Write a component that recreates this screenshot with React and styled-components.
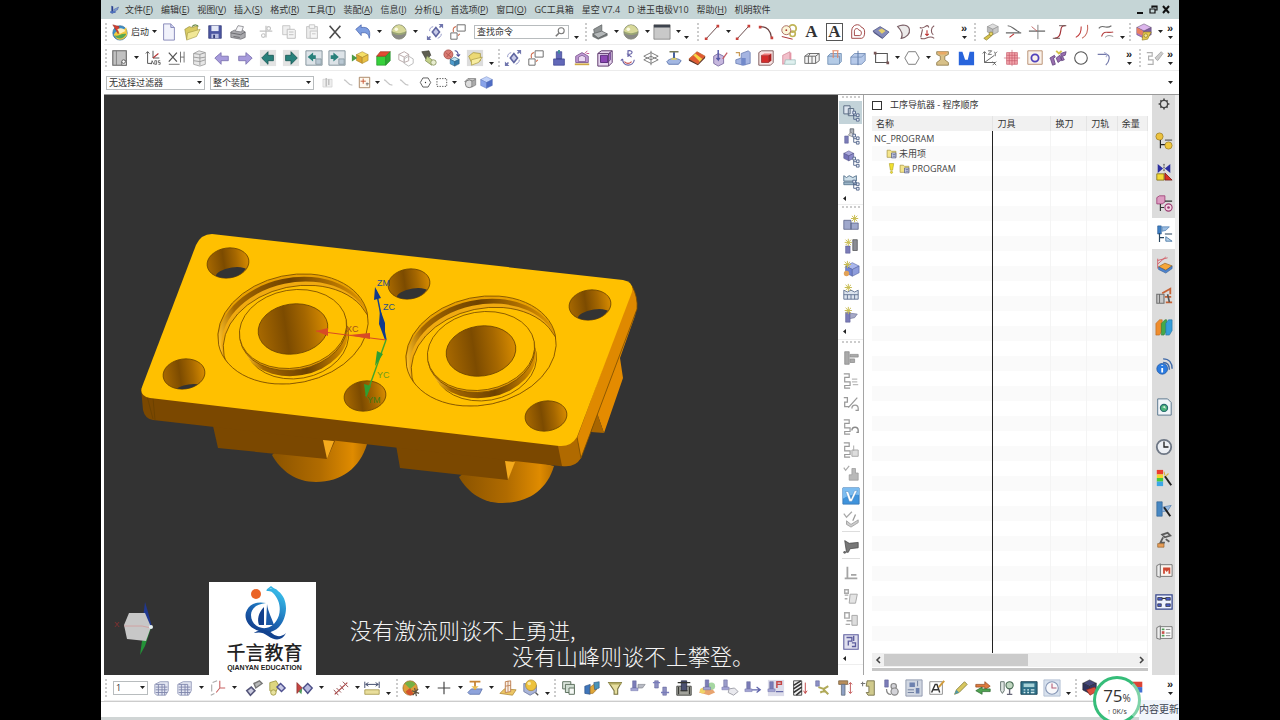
import * as React from 'react';
import styled, { createGlobalStyle, css } from 'styled-components';

const GlobalStyle = createGlobalStyle`
  * {
    box-sizing: border-box;
  }

  body {
    margin: 0;
    background: #000;
    color: #333;
    font: 9px/12px 'Open Sans', 'Noto Sans CJK SC', sans-serif;
  }

  button,
  select,
  input {
    margin: 0;
    padding: 0;
    border: 0;
    background: none;
    color: inherit;
    font: inherit;
  }
`;

/* ---------- icons, all on a 20 x 20 grid: [path, fill, stroke, width] ---------- */

const dot = (x, y, r) => `M${x - r} ${y}a${r} ${r} 0 1 0 ${2 * r} 0a${r} ${r} 0 1 0 ${-2 * r} 0z`;

const cube = (x, y, s, top, left, right, line) => [
  [`M${x} ${y + s / 4}l${s / 2} ${-s / 4} ${s / 2} ${s / 4} ${-s / 2} ${s / 4}z`, top, line, 0.6],
  [`M${x} ${y + s / 4}l${s / 2} ${s / 4}v${s / 2}l${-s / 2} ${-s / 4}z`, left, line, 0.6],
  [`M${x + s} ${y + s / 4}l${-s / 2} ${s / 4}v${s / 2}l${s / 2} ${-s / 4}z`, right, line, 0.6],
];

const star = (x, y) => [
  [`M${x} ${y - 4}v8M${x - 4} ${y}h8M${x - 3} ${y - 3}l6 6M${x + 3} ${y - 3}l-6 6`, 'none', '#c9bd52', 1.1],
];

const drill = (x, y, color = '#7b7cb8') => [
  [`M${x} ${y}h4v8h-4z`, color, '#5c5d94', 0.5],
  [`M${x - 2} ${y + 8}h8v3h-8z`, '#a3a4d4', '#6a6ba3', 0.5],
];

const tree = (x, y) => [
  [`M${x} ${y}v7h3M${x} ${y + 3}h3`, 'none', '#52658a', 1],
  [`M${x - 1} ${y - 2}h3v3h-3zM${x + 3} ${y + 1}h3v3h-3zM${x + 3} ${y + 6}h3v3h-3z`, '#e9eef8', '#52658a', 1],
];

const squiggle = [['M2 2h6v4h-5v5h6v4h-6v3h6', 'none', '#999', 1.3]];

const icons = {
  nx: [
    ['M4 3l3 1v12H4z', '#29408f'],
    ['M8 9l8-4-2 5-3 1v3H8z', '#7f9cd0', '#29408f', 0.6],
    ['M2 12h8v3H2z', '#4e70bb'],
  ],
  launch: [
    [dot(10, 11, 8), '#3f8fc8', '#2a6490', 0.7],
    ['M3 13c4-7 9-3 14-8l1 8c-3 6-9 7-12 4z', '#f3c83f'],
    ['M4 14c5 1 7-3 13-2-2 6-10 7-13 2z', '#57a854'],
    ['M2 2l7 2-1 8z', '#d33f31', '#8c2a20', 0.5],
    ['M7 7c4-2 7-1 9 2l-6 3z', '#fff1bd'],
  ],
  newFile: [
    ['M4 1h8l4 4v14H4z', '#f1f2fb', '#8183b5', 1],
    ['M12 1v4h4', '#cfd2ee', '#8183b5', 1],
  ],
  open: [
    ['M2 7l5-3 3 1 6-2v9L4 18z', '#d9cb62', '#93893a', 0.7],
    ['M5 11l14-4-4 8-11 4z', '#f1e796', '#a69b44', 0.7],
    ['M10 4c3-3 6-2 7 0', 'none', '#6b8a4b', 1.2],
  ],
  save: [
    ['M3 3h14v14H3z', '#4b56a2', '#333b77', 0.8],
    ['M6 3h8v6H6z', '#e4e8f6'],
    ['M6 12h8v5H6z', '#b6bce0'],
    ['M8 13h2v4H8z', '#333b77'],
  ],
  print: [
    ['M2 10l4-2h9l3 2v6l-5 2-11-2z', '#a9a9ad', '#6d6d72', 0.8],
    ['M7 9l3-6 6 1-2 6z', '#f5f5f7', '#77777c', 0.8],
    ['M2 11l11 2 5-3M5 15l7 1', 'none', '#66666b', 1],
  ],
  cut: [['M10 3v13M3 9h14', 'none', '#c2c2c2', 1.4], [dot(7, 14, 2), 'none', '#c2c2c2', 1.2], [dot(13, 6, 2), 'none', '#c2c2c2', 1.2]],
  copy: [['M3 3h8v10H3z', '#efefef', '#c4c4c4', 1], ['M8 7h8l1 1v9H8zM10 10h5M10 13h5', '#f4f4f4', '#bcbcbc', 1]],
  paste: [['M4 4h12v13H4z', '#ececec', '#c2c2c2', 1], ['M7 2h6v4H7zM8 9h8v8H8zM10 12h4', '#f6f6f6', '#c4c4c4', 1]],
  del: [['M4 3l12 14M16 3L4 17', 'none', '#4c4c4c', 1.8]],
  undo: [['M2 7l6-5v3c7-1 11 2 9 12-1-5-3-7-9-6v3z', '#7d9de0', '#4562aa', 0.8]],
  globe: [
    [dot(10, 10, 8), '#9aa574', '#74795e', 0.7],
    ['M2 9c4-9 12-9 16 0-5 3-11 3-16 0z', '#d8d99a'],
    ['M2 11c5 3 11 3 16 0-2 8-13 10-16 0z', '#8a8a86'],
    [dot(7, 7, 2), '#fafae4'],
  ],
  rotate: [
    ['M7 10l4-5 4 5-4 5z', '#c7cae8', '#5f65a0', 1.8],
    ['M14 1h5v5zM6 19H1v-5z', '#6f75ad'],
    ['M15 5l2-2M5 15l-2 2', 'none', '#6f75ad', 1.8],
    ['M4 9c0-3 1-4 4-5M17 12c0 3-2 4-4 5', 'none', '#8d92c4', 1],
  ],
  boxes: [['M9 2h9v7H9zM2 11h7v7H2z', '#fff', '#707070', 1.1], ['M5 10c-1-4 0-5 3-6M12 12l-2 2', 'none', '#ce6b4c', 1.2]],
  sheet: [
    ['M3 7l9-5v8L4 13z', '#8f9394', '#5d6162', 0.8],
    ['M2 12l10-3 6 3-10 5z', '#b4b8b9', '#5d6162', 0.8],
    ['M2 12v3l6 3 10-4v-2l-10 5z', '#74797a', '#55595a', 0.6],
  ],
  swatch: [['M1 2h18v16H1z', '#c9c9c9', '#777', 0.8], ['M1 2h18v3H1z', '#3d434d']],
  line: [['M4 17L16 4', 'none', '#5b3b3b', 1], ['M2 16h3v3H2zM15 2h3v3h-3z', '#c8413b']],
  arc: [['M4 4c7 0 11 4 12 12', 'none', '#6b4444', 1.3], ['M2 3h3v3H2zM15 15h3v3h-3z', '#c8413b']],
  circles: [
    [dot(14, 6, 4), 'none', '#c0b457', 2],
    [dot(14, 12, 3), 'none', '#c0b457', 1.8],
    [dot(7, 8, 5), '#fbf6d8', '#a6655b', 1],
    [dot(7, 8, 1), '#a33'],
    ['M2 15l12 3', 'none', '#a33', 1.1],
  ],
  profileLoop: [
    ['M3 17V9c0-8 9-9 11-4 5 0 4 12 0 12z', 'none', '#a34a4a', 1.1],
    ['M6 14v-5c0-3 4-4 5-1 4 0 3 6 1 6z', 'none', '#a34a4a', 1.1],
  ],
  plane: [['M1 9l8-5 10 6-7 7z', '#858bb9', '#4d5280', 0.8], ['M7 8l4-2 4 3-4 3z', '#e5cf6c'], ['M1 9l10 7 1 2-10-7z', '#4d5280']],
  shape: [['M3 4c5-3 12-2 13 3 1 5-3 9-9 10 2-4 1-8-4-13z', '#eceaea', '#7a5f66', 1.3]],
  spline: [
    ['M2 5c5 3 8-6 10 0M18 3c-4 2-4 8-1 10M3 17c5 3 9-5 15 0M5 7l-2 9', 'none', '#82595e', 1.2],
    ['M10 8v6m-2-2l2 2 2-2', 'none', '#bd2f2f', 1.2],
  ],
  keyCube: [...cube(6, 1, 12, '#ddd', '#bbb', '#c9c9c9', '#888'), ['M2 17l7-5 2 2-6 5z', '#d7c34c', '#8e8030', 0.8], [dot(10, 12, 2), '#e8d664', '#8e8030', 0.8]],
  joinRight: [['M3 3c5 0 6 4 13 7M1 11h17', 'none', '#666', 1.2], ['M5 16l5-4', 'none', '#bd2f2f', 1.2]],
  joinCross: [['M1 9h18', 'none', '#666', 1.4], ['M11 2v16', 'none', '#777', 1], ['M4 4l6 5', 'none', '#bd5f5f', 1]],
  sCurve: [['M16 3c-9-1-1 13-12 14', 'none', '#a5343a', 1.3], ['M9 3h8M2 17h8', 'none', '#6d5b5b', 1.1]],
  twoArcs: [['M8 4c0 6-1 9-6 12', 'none', '#c03a3a', 1.2], ['M15 2c1 7-1 12-6 15', 'none', '#c76b5f', 1.2]],
  tilde: [['M2 6c4-6 7 2 14-3', 'none', '#6a6a6a', 1.2], ['M5 15c3-8 7-3 13-5', 'none', '#b74747', 1.3], ['M9 16c3-3 6-2 9-1', 'none', '#888', 1]],
  colorCube: [
    ...cube(2, 1, 16, '#dcb5ec', '#ab78c7', '#7f5fa2', '#5f4a70'),
    ['M9 10h9l-4 8-6 1z', '#e6c94c', '#8f7c27', 0.7],
    [dot(12, 14, 2), '#f3e59b', '#8f7c27', 0.8],
    ['M2 5l7 4-1 5-6-3z', '#e97f60'],
  ],
  drawer: [
    ['M2 2h15v16H2z', '#c1c1c1', '#646464', 1.2],
    ['M6 2v16', 'none', '#7d7d7d', 1],
    ['M12 18v-4a3 3 0 0 1 5 0v4z', '#eee', '#555', 0.8],
    [dot(14, 14, 2), '#fff', '#555', 1],
  ],
  abs: [
    ['M4 3v13h5M10 2v8h7M4 3l-2 2M4 3l2 2', 'none', '#555', 1.1],
    ['M10 10l6-5', 'none', '#b53232', 1.2],
    ['M8 17l1-4 2 4M12 13h2v4h-2zM18 13h-2v2h2v2h-2', 'none', '#555', 0.9],
  ],
  xBar: [['M2 4l9 10M11 4L2 14', 'none', '#555', 1.4], ['M15 3v12M19 3v12M2 17h12M15 9h4', 'none', '#6a6a6a', 1]],
  building: [['M4 5l6-3 7 2v13l-6 2-7-2z', '#e7e7e7', '#999', 0.9], ['M4 9l7 1 6-1M4 13l7 1 6-2M4 5l7 1 6-2M11 6v12', 'none', '#999', 1]],
  left: [['M2 10l7-6v4h8v5H9v4z', '#a79bdc', '#776dac', 0.9]],
  right: [['M18 10l-7-6v4H3v5h8v4z', '#a79bdc', '#776dac', 0.9]],
  tealLeft: [['M1 1h18v18H1z', '#e3e3e3'], ['M3 10l7-7v4h6v6h-6v4z', '#28807b', '#175653', 0.9]],
  tealRight: [['M1 1h18v18H1z', '#e3e3e3'], ['M17 10l-7-7v4H4v6h6v4z', '#28807b', '#175653', 0.9]],
  winLeft: [['M1 2h18v16H1z', '#dde3e8', '#7f8f98', 1], ['M3 9l6-5v3h3v4H9v3z', '#28807b'], ['M12 11h6v6h-6z', '#bac9d4', '#7f8f98', 0.8]],
  winRight: [['M1 2h18v16H1z', '#dde3e8', '#7f8f98', 1], ['M12 9L6 4v3H3v4h3v3z', '#28807b'], ['M12 11h6v6h-6z', '#bac9d4', '#7f8f98', 0.8]],
  yellowCube: [...cube(6, 3, 13, '#f5df67', '#dca430', '#e8c145', '#a27e24'), ['M1 6l6 4-6 4z', '#4b9a48']],
  greenCube: [['M3 8h10v10H3z', '#36d13b', '#208d24', 0.7], ['M3 8l4-5h11l-5 5z', '#e34a32', '#9d2d1e', 0.7], ['M13 8l5-5v10l-5 5z', '#2eaa33', '#208d24', 0.7]],
  grayCubes: [['M2 6l6-3 5 3v7l-5 2-6-3zM2 6l6 3 5-3M8 9v6', 'none', '#b5a4a4', 1], ['M8 11l5-3 5 3v5l-5 3-5-3z', 'none', '#b8b8b8', 1]],
  wrench: [['M2 3l8-1 2 5-5 5z', '#5f5f52', '#3a3a30', 0.7], ['M8 8l8 6-3 4-7-5z', '#c3d189', '#84905b', 0.9], [dot(15, 15, 3), '#e8edd0', '#84905b', 0.9]],
  linkCube: [[dot(6, 6, 5), '#d97b73', '#9d4038', 0.8], ['M3 4l6 5M9 3L4 9', 'none', '#b1534b', 1], ['M13 2c3 0 4 2 4 6m-2-2l2 2 2-2', 'none', '#4d4f99', 1.2], ...cube(8, 9, 10, '#bfe3f1', '#4c9acb', '#357ba8', '#27597a')],
  folderNew: [['M1 1h18v18H1z', '#dcdcdc'], ['M3 8l5-4 8 1v8l-9 4z', '#ecd975', '#a39238', 0.8], ['M6 12l12-3-4 6-8 3z', '#f8eda1', '#a39238', 0.7]],
  pillar: [['M7 3h6v8H7zM4 11h12v7H4z', '#6268b8', '#3e4390', 0.8], ['M10 1v4', 'none', '#3c8f95', 2]],
  sketchPurple: [['M3 15V8l7-4 7 4v7z', '#c099d4', '#75518a', 0.9], ['M6 14V9l4-2 4 2v5z', '#ead8f2', '#75518a', 0.8], ['M2 17h16', 'none', '#cfa843', 2], ['M16 2l-3 3M18 5h-3', 'none', '#c34b88', 1]],
  wireCube: [['M2 5l4-3h12v13l-4 4H2z', '#e6d4ef', '#5f3d6e', 1.1], ['M5 7h8v8H5z', '#8c46b5', '#542777', 1], ['M13 7l3-3v8l-3 3z', '#b274d5', '#542777', 0.8], ['M2 5h12v14M14 5l4-3', 'none', '#5f3d6e', 1]],
  hookR: [['M4 11c0 9 12 9 13 1M4 11l-2 2M10 9V2c6-1 6 4 0 4l4 3', 'none', '#6460a5', 1.3], ['M6 14c3 3 6 2 8 0', 'none', '#c65050', 1.2]],
  layersGray: [['M2 8l8-4 8 4-8 4zM2 12l8-4 8 4-8 4zM10 2v16', 'none', '#808080', 1.1]],
  bluePad: [['M2 14c3-4 11-5 16-1l-3 4H4z', '#a3b7e2', '#526ca7', 0.9], ['M5 3h10M10 3v8', 'none', '#767b5a', 1.6], ['M10 8l-4 4h8z', '#d6ca66'], ['M10 4v6', 'none', '#3e5ba0', 2]],
  stripes: [['M1 11l9-8 9 5-8 9z', '#f7d546', '#8a3a1d', 0.6], ['M1 11l5-4 7 7-2 3zM10 3l9 5-3 3-8-6z', '#df5b33'], ['M1 11v2l10 5 8-8V8l-8 9z', '#5b2d1f']],
  arrowPad: [['M3 8l5-3 6 3v8l-6 3-5-3z', '#c6b7de', '#71629a', 0.9], ['M8 1v11l-2-2m2 2l2-2', 'none', '#575ba7', 1.6], ['M18 4l-5 7', 'none', '#c65b63', 1.4]],
  blueSteps: [['M2 12l6-2V5l8-3 2 2v12l-8 2-8-2z', '#a5b5e2', '#6175ad', 0.8], ['M8 10h5v8H8z', '#7189ca'], ['M2 4h4v4', 'none', '#c99b57', 1.3]],
  redCube: [['M2 4l3-2h13v13l-3 3H2z', '#f6e3e3', '#7b5656', 1], ['M5 7h8v8H5z', '#d42b2b', '#8a1717', 0.7], ['M5 7l3-2h8l-3 2z', '#f07a7a'], ['M13 7l3-2v8l-3 2z', '#a91e1e']],
  pinkFold: [['M3 7l8-4v11l-8 3z', '#f1bfca', '#cf8193', 0.8], ['M6 12h11v5H5z', '#dff0ef', '#9bbcba', 0.8], ['M12 4v8', 'none', '#de6d85', 1]],
  tray: [['M2 8l4-3h12v8l-4 3H2zM2 8h12v8M14 8l4-3M8 5l-2 3v8M10 8v8', '#f4f4f4', '#616161', 1]],
  splitPad: [['M2 8l3-3h12v9l-3 3H2z', '#b4cbe6', '#6889b0', 0.9], ['M2 8h13v9', 'none', '#6889b0', 0.8], ['M7 2h7M8 2v8M13 2v8', 'none', '#e18868', 1.2]],
  blueSlab: [['M2 9l4-4h12v8l-4 4H2z', '#b6c9e9', '#6c87b1', 0.9], ['M10 2v16', 'none', '#5d79a9', 1.1], ['M2 9h12l4-4', 'none', '#6c87b1', 0.8]],
  rect: [['M4 5h13v10H4z', 'none', '#565656', 1.2], ['M2 3h3v3H2zM16 14h3v3h-3z', '#755']],
  hexagon: [['M6 3h8l4 7-4 7H6l-4-7z', 'none', '#808080', 1.1]],
  spool: [['M3 3h13v3l-4 2v4l4 3v3H3v-3l4-3V8L3 6z', '#d8c189', '#8c7848', 0.9], ['M4 3h11l-2 3H6z', '#e9a964']],
  bigU: [['M2 3h4l3 9h3l2-9h5v15H2z', '#2864dc']],
  zyx: [['M5 3v12h12M5 15L16 7M5 3L3 5M5 3l2 2', 'none', '#666', 1.1], ['M9 2h4L9 6h4M16 3l1 2 2-2M17 5v3M14 14l4 4M18 14l-4 4', 'none', '#666', 1]],
  pinkGrid: [['M4 4h12v13H4z', '#f2a4ab', '#cc6572', 0.8], ['M1 10h18M10 1v18M4 7h12M4 13h12M7 4v13M13 4v13', 'none', '#c65768', 0.7]],
  ring: [['M2 2h16v15H2z', '#faf1e9', '#ba9477', 1.1], [dot(10, 10, 4), 'none', '#5041bb', 2]],
  tag: [['M1 10l5-3 1 2-2 1 2 7-3 1-2-6zM8 10l4-3 2 5-4 3zM13 5l6-2-1 4-3 1 2 4-3 1z', '#9a6fb0', '#62447d', 0.9], ['M8 2l3 3 3-3', 'none', '#d6c14b', 2]],
  circle: [[dot(10, 10, 7), 'none', '#555', 1.2]],
  hook: [['M3 6h9c6 0 4 8 0 12', 'none', '#7379aa', 1.3], ['M10 4c4 1 4 3 2 5', 'none', '#a5a9cf', 1.2]],
  path: [['M2 4h6v4H4v4h5v5H3', 'none', '#b0b0b0', 1.3], ['M11 10l7-7 2 2-6 8z', '#ccc', '#aaa', 1]],
  gearBox: [['M3 5h14v12H3z', '#eee', '#ccc', 1], ['M8 3v13M12 5v9', 'none', '#b9b9b9', 2]],
  dashes: [['M3 6c5 0 4 7 13 8', 'none', '#c6c6c6', 2]],
  plusBox: [['M2 2h16v16H2z', '#fff9ef', '#a07a55', 1.3], ['M4 8h8M8 4v8', 'none', '#c3522e', 1.4], ['M12 12h5M14 10v5', 'none', '#555', 1.1]],
  hexDot: [['M6 3h8l4 7-4 7H6l-4-7z', 'none', '#555', 1.4], [dot(10, 10, 1), '#333']],
  dashRect: [['M3 4h15v12H3z', 'none', '#444', 1.4, '2 2']],
  grayCube: [['M1 9l5-5h12l-3 5z', '#ccc', '#666', 1], [dot(8, 12, 6), '#ddd', '#666', 1.2], ['M12 8v9l6-3V5z', '#aaa', '#777', 1]],
  blueCube: cube(1, 1, 18, '#c2d3fa', '#88a3ea', '#4e6cc4', '#4f68b0'),
  layerStack: [['M2 6l6-3h9v10l-3 5H4l-2-2z', '#e3e6f2', '#7f86ac', 0.8], ['M3 6h10v12M3 9h13M3 12h13M3 15h13M6 6v12M10 6v12', 'none', '#7f86ac', 1]],
  redAxes: [['M12 2v8h6M12 10l-4 5', 'none', '#c76060', 1.2], ['M4 4l5-2M3 6v8M2 18l4-2', 'none', '#a9a9a9', 1.2]],
  chain: [['M2 13l5-4 4 4-5 5z', '#cacbdf', '#545579', 1.8], ['M10 5l6-3 3 3-7 5z', '#b7b8b9', '#777', 1.6]],
  chainGold: [['M2 4l7-2 3 5-4 9-6-3z', '#ded680', '#9c943e', 0.9], ['M10 9l4-4 5 5-4 4z', '#c8c9e6', '#4f5190', 1.6], [dot(6, 15, 3), '#e8e29f', '#9c943e', 0.9]],
  eraser: [['M1 4l6 6-6 6z', '#c44542', '#812826', 0.7], ['M3 14l4-4-1 7z', '#4f9a5c'], ['M8 10l5-5 5 5-5 6z', '#b8badf', '#4b4e87', 1.6]],
  ruler: [['M3 17L17 4', 'none', '#a93737', 1.2], ['M2 12l5 6M5 10l5 5M9 7l4 5M12 3l6 6', 'none', '#9b5a5a', 1.1]],
  measure: [['M2 12h16v5H2z', '#e9de9c', '#a39549', 0.9], ['M2 3v7M18 3v7M3 6h14M6 4L3 6l3 2M14 4l3 2-3 2', 'none', '#46506f', 1.1]],
  palette: [[dot(9, 10, 8), '#df9d37', '#8b5a1f', 0.7], ['M3 5c4-4 10-3 12 1l-6 5z', '#76b043'], ['M4 14l5-4 4 7c-4 2-7 1-9-3z', '#d2542d'], ['M11 13l8 3M14 10l2 9M12 18l6-7', 'none', '#5b5040', 1.3]],
  plus: [['M10 3v14M3 10h14', 'none', '#444', 1.3]],
  lampPad: [['M2 15l4-4h12l-3 6H4z', '#8ea3db', '#5067a3', 0.8], ['M4 3h12M10 3v9', 'none', '#c78435', 2], ['M6 8h8l-4 4z', '#ebbf55']],
  goldBox: [['M1 16l5-5 13 1-4 6z', '#ecc665', '#aa812b', 0.8], ['M7 3l6-1v12l-6 1z', '#f9efe6', '#bb7a4b', 1], ['M10 2v12M7 8l6-1', 'none', '#bb7a4b', 0.9]],
  goldBall: [['M2 5v9l7 4 7-4V7z', '#a9b4d8', '#68749f', 0.9], [dot(10, 7, 6), '#edc23d', '#a9851f', 0.7], [dot(8, 5, 2), '#fae8a4'], ['M15 15l3 3', 'none', '#555', 1.5]],
  windows: [['M3 3h9v8H3z', '#e1e9e1', '#5e7160', 1.1], ['M6 6h10v9H6z', '#d0ddd2', '#5e7160', 1.1], ['M10 10h6v7h-6z', '#f5f8f5', '#5e7160', 1.1]],
  blueGold: [['M2 8l6-2v11l-6-1z', '#3f76bb', '#284d80', 0.7], ['M8 9l4-3h3v6l-4 4H8z', '#e0a739', '#94661c', 0.7], ['M12 4l6-1v7l-5 2z', '#4a94b8', '#284d80', 0.6]],
  funnel: [['M3 4h14l-4 7v6H9v-4z', '#e7df9f', '#77733f', 1.2], ['M3 4h14v2H4z', '#b1aa60']],
  toolA: [...drill(4, 2), ['M10 6h8l-3 4h-5z', '#b7bac4', '#7c7f88', 0.7]],
  toolB: [['M3 2h4v8H3zM12 9h4v9h-4z', '#8f91c4', '#5c5d94', 0.6], ['M1 4h8M10 15h9', 'none', '#797dba', 1.6]],
  toolHead: [['M2 8h16v10H2z', '#a1a29b', '#42433f', 1], ['M7 2h6v11H7z', '#4c5170', '#22263f', 0.8], ['M3 4h14M4 9v8M16 9v8M6 13h8', 'none', '#33342f', 1.2]],
  toolHeat: [['M1 15l5-6 9 1 4 5-7 3z', '#e8a46f'], [dot(15, 8, 4), '#a6d7a2'], [dot(5, 13, 3), '#f0d568'], ...drill(8, 1)],
  toolC: [...drill(3, 1, '#9a9cc9'), ['M9 11l6-1 4 4-5 4-6-3z', '#e9e9ee', '#9b9ca5', 1]],
  toolD: [...drill(3, 3), ['M9 12h9M14 9l4 3-4 3', 'none', '#5f64ab', 1.4]],
  toolE: [['M1 1h18v18H1z', '#dcdcea'], ...drill(3, 3), ['M11 10V3h5v3h-5', 'none', '#c44444', 1.6], ['M10 14h8', 'none', '#6468a8', 1.4]],
  hatch: [['M4 2h9v16H4z', '#f1f1f1', '#444', 1], ['M4 7l8-5M4 11l9-6M4 15l9-6M7 18l6-5', 'none', '#333', 1.7], ['M17 4v12m-2-3l2 3 2-3', 'none', '#bd3d3d', 1]],
  wires: [['M3 2h4v6H3z', '#8d91c6', '#5c5d94', 0.6], ['M6 9l6 2 5-3M8 15l5-2 4 4M12 11v4', 'none', '#b0a958', 2.2]],
  bolt: [['M3 2h10v4H3z', '#b98f5b', '#7c6240', 0.9], ['M6 6h4v12H6z', '#8fa0c4', '#64707e', 0.9], ['M16 4v12M14 6l2-2 2 2M14 14l2 2 2-2', 'none', '#bd4d4d', 1]],
  block: [['M9 2h8v16h-7l-2-3h3V8H8z', '#d0ca8d', '#77734c', 1], ['M2 5h5M4 3v5', 'none', '#777', 1.2]],
  ears: [['M3 1h4v8H3z', '#7b7cb8', '#5c5d94', 0.6], [dot(13, 8, 3), '#d3d3d8', '#888', 1.3], [dot(14, 14, 4), '#d3d3d8', '#888', 1.3], ['M5 11c0 5 2 6 5 6', 'none', '#888', 1.4]],
  floppy: [['M1 1h18v18H1z', '#d1d7e2', '#8c96ab', 1], ['M5 4h6v5H5zM12 10h4v6h-4z', '#6d81af'], ['M3 12h7M3 15h7M14 2v6', 'none', '#68789a', 1]],
  textEdit: [['M2 3h14v14H2z', '#fff', '#888', 1], ['M4 15l4-9h2l3 9M5 12h6', 'none', '#333', 1.6], ['M12 9l6-7', 'none', '#d19c3c', 2.2]],
  pencil: [['M4 17l2-5 9-9 3 3-9 9z', '#d8c75f', '#86803e', 0.9], ['M4 17l2-5 3 3z', '#4f98a8']],
  swap: [['M2 6h10V3l6 5-6 4V9H2z', '#de7a3d', '#93471d', 0.8], ['M18 14H9v3l-7-4 7-4v2h9z', '#4fa352', '#2a672c', 0.8]],
  pens: [['M4 3h4v10l-2 3-2-3z', '#dfe5e2', '#5e6e69', 1], [dot(14, 7, 4), '#c0d7c1', '#4a6c55', 1.2], ['M14 11v6M11 17h6', 'none', '#667', 1.5]],
  calc: [['M1 3h18v14H1z', '#2e7088', '#174356', 1], ['M4 5h12v4H4z', '#a8d2d8'], ['M4 12h2M8 12h2M12 12h4M4 15h2M8 15h2M12 15h4', 'none', '#d2ecef', 1.4]],
  clockBox: [['M1 1h18v18H1z', '#d7e1ee', '#b2c0d3', 1], [dot(10, 10, 7), '#f7f8fb', '#8495b5', 1.2], ['M10 5v5h5', 'none', '#b65c75', 1.2]],
  darkCube: [...cube(2, 1, 15, '#45487b', '#2e315d', '#35396b', '#222'), ['M6 12l9-3 4 4-9 5z', '#db4f3e', '#7e241a', 0.7]],
  blocks: [['M3 3h14v6H3z', '#dc4334'], ['M3 9h14v6H3z', '#416fd2']],
  navOrder: [['M2 2h7v9H2zM7 5h6v8H7z', '#dce4ee', '#5b6d84', 1.1], ...tree(13, 10)],
  navTool: [['M9 2h4v7H9z', '#adb2ba', '#5e636b', 0.9], ['M7 9l3-3 4 3-2 2z', '#d2d5da', '#777', 0.7], ['M3 10h4v8H3z', '#7b7cb8', '#5c5d94', 0.6], ...tree(13, 10)],
  navGeo: [...cube(2, 1, 11, '#a9a7db', '#7472b8', '#8c8acb', '#4d4c83'), ...tree(13, 10)],
  navMethod: [['M2 3l3 2 3-2 4 2 4-2v6H2z', '#cfe0ea', '#526f8a', 1], ['M2 10h14v3H2z', '#9db6c8', '#526f8a', 0.9], ...tree(13, 10)],
  newProg: [['M2 7h8v10H2zM10 10h8v7h-8z', '#9fa8cc', '#5c6589', 0.9], ...star(14, 5)],
  newTool: [['M4 10h5v8H4z', '#7b7cb8', '#5c5d94', 0.6], ['M12 3h5v12h-5z', '#8a8c92', '#4d4e52', 0.8], ...star(7, 6)],
  newGeo: [...cube(4, 3, 15, '#aab7ec', '#7183d0', '#8e9ddc', '#4d5b9b'), ...star(6, 5), [dot(5, 15, 3), '#e1a259']],
  newMethod: [['M2 8l4 2 4-2 4 2 4-2v10H2z', '#dbe3ee', '#5f7090', 1], ['M2 13h16M6 13v5M10 13v5M14 13v5', 'none', '#5f7090', 1], ...star(7, 5)],
  newOp: [['M4 7h5v11H4z', '#7b7cb8', '#5c5d94', 0.6], ['M9 8l8 1-3 4-5 1z', '#a7aac7', '#6b6f96', 0.7], ...star(7, 5)],
  gTool: [['M3 3h5v14H3zM9 6h9v3H9zM9 11h5v4H9z', '#aaa', '#888', 0.8]],
  gPath1: [...squiggle, ['M11 8h6M11 11h6M12 14h6', 'none', '#bbb', 1.4]],
  gPath2: [['M2 3h4v5H3v5h5M17 3L7 14', 'none', '#999', 1.4], ['M11 15c0-5 7-5 7 0v2h-3', 'none', '#999', 1.4]],
  gPath3: [...squiggle, ['M11 14c0-5 7-5 7 0v2h-2', 'none', '#8a8a8a', 1.5]],
  gPath4: [...squiggle, ['M13 5v6M11 10h7v7h-7z', '#ddd', '#aaa', 1.1]],
  gCheck: [['M2 4l2 3 4-5', 'none', '#aaa', 1.3], ['M11 5h4v5h3v8H8v-6h3z', '#b9b9b9', '#999', 0.8]],
  bigV: [['M1 1h18v18H1z', '#3f93dc', '#3b7cb8', 1], ['M1 1h18v8C12 8 6 10 1 13z', '#7cbcf0'], ['M4 5l4 11h3l6-12h-3l-4 9-3-8z', '#fff', '#3b7cb8', 0.5]],
  gCheckPen: [['M2 4l3 4 6-6', 'none', '#aaa', 1.4], ['M5 12l5 4 8-5v3l-8 5-5-3z', '#ccc', '#999', 0.9], ['M15 5l-3 7', 'none', '#999', 1.4]],
  gSpray: [['M3 4l5 3 10-1v6l-9 1-2 4H5z', '#777', '#444', 0.8], [dot(3, 17, 1.5), '#666']],
  gList: [['M6 3v13M3 16h14M10 12h6', 'none', '#a5a5a5', 2]],
  gDoc: [['M3 3h4v4H3zM3 9h4M3 13h3', 'none', '#aaa', 1.6], ['M9 8h8l-2 10H8z', '#e4e4e4', '#aaa', 1.1]],
  gDoc2: [['M3 3h5v6H3zM5 12h6M4 16h5', 'none', '#aaa', 1.6], ['M11 6h6v11h-6z', '#ddd', '#aaa', 1.1]],
  pBox: [['M2 2h16v16H2z', '#dfdfee', '#5d5d9e', 1.2], ['M5 5h6v4H7v5M11 11h4v4h-4M13 3v6', 'none', '#5d5d9e', 1.5]],
  gear: [[dot(10, 10, 6), 'none', '#444', 2.2], ['M10 1v3M10 16v3M1 10h3M16 10h3M4 4l2 2M14 14l2 2M4 16l2-2M14 6l2-2', 'none', '#444', 2.6]],
  rAssembly: [[dot(5, 5, 4), '#ecc23f', '#9b7b22', 0.8], ['M6 9v9M6 14h5', 'none', '#222', 1.3], [dot(15, 15, 4), '#f1c83e', '#9b7b22', 0.8], ['M11 9h8', 'none', '#555', 1.3]],
  rConstraint: [['M3 1l6 5-6 5zM17 1l-6 5 6 5z', '#2c2fa0'], ['M10 1v9', 'none', '#222', 1, '2 1'], ['M2 12h8v7H2z', '#f4da36', '#7f6c18', 0.9], ['M11 11l8 8h-8z', '#d93025', '#6f1610', 0.8]],
  rPart: [['M2 4l3-2h6v7l-3 2H2z', '#dc9cc1', '#9c3b72', 0.9], ['M6 11v8M6 15h4M11 8h8', 'none', '#333', 1.3], [dot(15, 15, 4), '#f4d7e6', '#9c3b72', 1.2], [dot(15, 15, 1.5), '#9c3b72']],
  rOp: [['M3 1h4v9H3z', '#3f7fc4', '#2a5a90', 0.7], ['M8 2h8l-4 4-4 1z', '#9bbce0', '#4576ad', 0.7], ['M5 9v10M5 14h5M11 10h8', 'none', '#29455f', 1.3], ['M12 18v-5l7 5z', '#b9d3ec', '#3f6f9f', 0.9]],
  rMachine: [['M3 9l9-8M3 5l11-3M3 3v11', 'none', '#d25d67', 1], ['M4 12l7-4 8 3-7 5z', '#f5a638', '#a2671c', 0.8], ['M4 12v3l8 4 7-5v-3l-7 5z', '#4c84cf', '#2c548a', 0.6]],
  rRobot: [['M2 8h8v10H2zM5 8v10', '#c9c9c9', '#6f6f6f', 1.2], ['M8 7l9-5v6M11 11h7M12 17h7', 'none', '#c76336', 2], ['M14 8l2 9', 'none', '#555', 1.8]],
  rBooks: [['M1 6l4-4h3v12l-3 5H1z', '#ef8d2e', '#b15f16', 0.6], ['M7 6l4-4h2v12l-3 5H7z', '#44a94a', '#2a752e', 0.6], ['M12 6l3-4h4v12l-3 5h-4z', '#359dda', '#206c9a', 0.6]],
  rInfo: [['M9 5c5 0 7 3 7 8M9 1c7 0 10 5 10 11', 'none', '#3f69a8', 1.6], [dot(8, 12, 6), '#2b7be0', '#1a549f', 0.8], ['M8 11v5M8 8v1', 'none', '#fff', 2]],
  rWeb: [['M3 1h11l4 4v14H3z', '#f2f6fa', '#5d7990', 1.1], [dot(10, 11, 4), '#4bb37a', '#286b70', 1.3], ['M8 10l3-1 1 3z', '#d7efe1']],
  rClock: [[dot(10, 10, 8), '#eceff4', '#6d7684', 2], ['M10 4v6h5', 'none', '#222', 1.5]],
  rRainbow: [['M2 1h7v5H2z', '#ec3c2f'], ['M2 6h7v4H2z', '#f4d62e'], ['M2 10h7v4H2z', '#44c93e'], ['M2 14h7v5H2z', '#3ca7e7'], ['M11 8l7 10', 'none', '#222', 2.2], ['M10 3l1 4M15 5l-3 3', 'none', '#d5b546', 1.2]],
  rWand: [['M2 2h6v16H2z', '#4787c2', '#2e608f', 0.7], ['M8 8l10-2-4 6-6 1z', '#9bbce1', '#4576ad', 0.7], ['M10 8l7 10', 'none', '#222', 2.2]],
  rMotion: [['M8 4l6-2 3 3-6 2zM9 7l-3 6h5M12 9l4 3', 'none', '#5b5b5b', 2], ['M3 14h7v4H3z', '#e89e57', '#8d5b28', 0.7]],
  rNotes: [['M2 4l4-2v15l-4-1z', '#eee', '#6e6e6e', 1], ['M6 3h13v13H6z', '#f9f4ef', '#6e6e6e', 1], ['M9 6v7h2V9l2 2 2-2v4h2V6z', '#ce4832']],
  rFlow: [['M1 2h18v16H1z', '#eef2ff', '#35458b', 1.4], ['M3 5h5v3H3zM12 5h5v3h-5zM3 12h4v3H3zM12 12h5v3h-5z', '#4a5dcb', '#222', 0.7], ['M8 6h4', 'none', '#222', 1.2]],
  rList: [['M2 4l4-2v15l-4-1z', '#eee', '#6e6e6e', 1], ['M6 3h13v13H6z', '#fff', '#6e6e6e', 1], ['M9 5v2M9 12v2', 'none', '#4d9c53', 3], ['M9 8v3', 'none', '#c7534c', 3], ['M12 6h5M12 10h5M12 13h5', 'none', '#777', 1]],
  folder: [['M2 4h6l2 2h8v11H2z', '#f5e58b', '#9e8c39', 1.2], ['M10 9h8v9h-8z', '#cfd4ea', '#474e80', 1.2], ['M12 12h5M12 15h5', 'none', '#474e80', 1.2]],
  alert: [['M6 1h8l-2 12H8z', '#f1e12f', '#a59719', 1], [dot(10, 17, 2), '#f1e12f', '#a59719', 1]],
  search: [[dot(12, 8, 5), 'none', '#777', 1.8], ['M8 12l-5 5', 'none', '#777', 2.6]],
};

const Svg = styled.svg`
  display: block;
  flex: none;
  overflow: visible;
`;

function Icon({ name, size = 18 }) {
  return (
    <Svg width={size} height={size} viewBox="0 0 20 20" aria-hidden="true">
      {icons[name].map(([d, fill, stroke, width, dash], i) => (
        <path key={i} d={d} fill={fill} stroke={stroke || 'none'} strokeWidth={width} strokeDasharray={dash} />
      ))}
    </Svg>
  );
}

/* ---------- window ---------- */

const Screen = styled.div`
  position: relative;
  display: flex;
  flex-direction: column;
  height: 100vh;
  margin: 0 101px;
  padding-left: 3px;
  background: #fff;
  overflow: hidden;
`;

const MenuBar = styled.header`
  display: flex;
  align-items: center;
  height: 19px;
  flex: none;
  margin-left: -3px;
  padding: 0 8px;
  background: #c5d5d6;
`;

const MenuItem = styled.button`
  margin-right: 8px;
  white-space: nowrap;

  &:first-of-type {
    margin-left: 4px;
  }
`;

const WindowButtons = styled.div`
  display: flex;
  gap: 4px;
  margin-left: auto;
`;

const Toolbar = styled.div`
  display: flex;
  flex: none;
  height: ${(p) => (p.$short ? 24 : 26)}px;
  border-bottom: 1px solid ${(p) => (p.$strong ? '#9a9a9a' : '#ececec')};
`;

const Group = styled.div`
  display: flex;
  align-items: center;
  flex: none;
  width: ${(p) => (p.$width ? `${p.$width}px` : 'auto')};

  &:last-child {
    flex: 1;
  }
`;

const Grip = styled.i`
  flex: none;
  ${(p) =>
    p.$flat
      ? css`
          width: 18px;
          height: 4px;
          margin: 1px 0;
          border-top: 2px dotted #ccc;
        `
      : css`
          width: 2px;
          height: 18px;
          margin: 0 1px;
          border-left: 2px dotted #ccc;
        `}
`;

const Tool = styled.button`
  display: flex;
  align-items: center;
  justify-content: center;
  flex: none;
  width: ${(p) => (p.$small ? 16 : 23)}px;
  height: 23px;
  background: ${(p) => (p.$active ? '#c3d3d9' : 'none')};
`;

const Letter = styled.span`
  width: 17px;
  border: ${(p) => (p.$boxed ? '1px solid #555' : '0')};
  color: #333;
  font: bold 17px/16px 'Liberation Serif', serif;
`;

const Gap = styled.i`
  flex: none;
  width: ${(p) => p.$size}px;
`;

const Drop = styled.button`
  flex: none;
  width: 8px;
  height: 20px;
  display: flex;
  align-items: center;
  justify-content: flex-end;
`;

const EndMark = styled.button`
  width: 10px;
  height: 14px;
  display: flex;
  align-items: flex-end;
  justify-content: center;
`;

const More = styled.button`
  display: flex;
  flex-direction: column;
  align-items: center;
  gap: 4px;
  width: 10px;
  margin-left: auto;
  margin-right: 4px;
  color: #222;
  font: bold 11px/8px 'Liberation Sans', sans-serif;
`;

const Field = styled.label`
  position: relative;
  display: flex;
  align-items: center;
  flex: none;
  width: ${(p) => p.$width}px;
  height: 14px;
  padding: 0 2px;
  border: 1px solid #b8bcbe;

  select,
  input {
    flex: 1;
    min-width: 0;
    height: 12px;
    appearance: none;
    outline: 0;
  }
`;

const Launch = styled.button`
  width: 18px;
  white-space: nowrap;
`;

const Status = styled.footer`
  flex: none;
  height: 19px;
  margin-left: -3px;
  border-top: 1px solid #ccc;
  border-bottom: 3px solid #d0d5d5;
`;

const Caret = () => (
  <Svg width="5" height="3" viewBox="0 0 5 3">
    <path d="M0 0h5L2.5 3z" fill="#222" />
  </Svg>
);

// '|' and '.' are gaps, 'v' a drop-down arrow, ';' the mark that ends a group
function renderTool(name, i, small) {
  switch (name) {
    case '|':
      return <Gap key={i} $size={5} />;
    case '.':
      return <Gap key={i} $size={2} />;
    case 'v':
      return (
        <Drop key={i} aria-label="展开">
          <Caret />
        </Drop>
      );
    case ';':
      return (
        <EndMark key={i} aria-label="选项">
          <Caret />
        </EndMark>
      );
    case 'A':
    case '[A]':
      return (
        <Tool key={i}>
          <Letter $boxed={name === '[A]'}>A</Letter>
        </Tool>
      );
    default:
      return (
        <Tool key={i} $small={small} aria-label={name}>
          <Icon name={name} size={small ? 13 : 18} />
        </Tool>
      );
  }
}

const Tools = ({ list, small }) => list.split(' ').map((name, i) => renderTool(name, i, small));

const Overflow = ({ single }) => (
  <More aria-label="更多">
    {!single && <span>»</span>}
    <Caret />
  </More>
);

const Select = ({ label, value, width }) => (
  <Field $width={width}>
    <select aria-label={label} defaultValue={value}>
      <option>{value}</option>
    </select>
    <Caret />
  </Field>
);

const menus = [
  ['文件', 'F'],
  ['编辑', 'E'],
  ['视图', 'V'],
  ['插入', 'S'],
  ['格式', 'R'],
  ['工具', 'T'],
  ['装配', 'A'],
  ['信息', 'I'],
  ['分析', 'L'],
  ['首选项', 'P'],
  ['窗口', 'O'],
  ['GC工具箱'],
  ['星空 V7.4'],
  ['D 进玉电极V10'],
  ['帮助', 'H'],
  ['机明软件'],
];

/* ---------- main area ---------- */

const Main = styled.main`
  display: flex;
  flex: 1;
  min-height: 0;
`;

const Viewport = styled.section`
  position: relative;
  flex: 1;
  min-width: 0;
  background: #333;
`;

const Scene = styled.svg`
  display: block;
  width: 100%;
  height: 100%;
`;

const Logo = styled.div`
  position: absolute;
  left: 105px;
  bottom: 0;
  display: flex;
  flex-direction: column;
  align-items: center;
  width: 107px;
  height: 93px;
  padding: 4px 0 0 4px;
  background: #fff;
  color: #222;
`;

const LogoName = styled.strong`
  font: 500 19px/24px 'Noto Sans CJK SC', sans-serif;
`;

const LogoSub = styled.small`
  font: bold 7px/8px 'Liberation Sans', sans-serif;
  white-space: nowrap;
`;

const Captions = styled.div`
  position: absolute;
  left: 246px;
  bottom: 7px;
  color: #f4f4f4;
  font: 300 22px/26px 'Noto Sans CJK SC', sans-serif;
  white-space: nowrap;

  p {
    margin: 0;
  }

  p + p {
    padding-left: 162px;
  }
`;

const SideTools = styled.nav`
  flex: none;
  width: 26px;
  border-right: 1px solid #a5a5a5;
`;

const SideGroup = styled.div`
  display: flex;
  flex-direction: column;
  align-items: center;
  height: ${(p) => p.$height}px;
  border-bottom: 1px solid #eee;

  hr {
    width: 18px;
    margin: 1px 0 2px;
    border: 0;
    border-top: 1px solid #ddd;
  }
`;

const SideMark = styled.button`
  width: 16px;
  height: 10px;
`;

const Panel = styled.aside`
  display: flex;
  flex-direction: column;
  flex: none;
  width: 288px;
  padding: 2px 4px 4px 8px;
`;

const PanelTitle = styled.h2`
  display: flex;
  align-items: center;
  gap: 8px;
  height: 16px;
  margin: 0 0 3px;
  font-size: 9px;
  font-weight: 400;

  input {
    width: 10px;
    height: 9px;
    appearance: none;
    border: 1px solid #333;
  }
`;

const TableBox = styled.div`
  flex: 1;
  min-height: 0;
  overflow: hidden;
`;

const Table = styled.table`
  width: 100%;
  border-collapse: separate;
  border-spacing: 0;
  table-layout: fixed;

  th,
  td {
    height: 15px;
    padding: 0 0 0 4px;
    border-right: 1px solid #f4f4f4;
    line-height: 14px;
    font-weight: 400;
    text-align: left;
    white-space: nowrap;
  }

  th {
    background: #f1f1f1;
    border-color: #e4e4e4;
  }

  td {
    padding-left: 2px;
    color: #444;
    font-size: 9px;
  }

  td:first-child {
    border-right-color: #222;
  }

  tr:nth-child(even) td {
    background: #fafafa;
  }
`;

const Node = styled.span`
  display: flex;
  align-items: center;
  gap: 2px;
  padding-left: ${(p) => p.$depth * 12}px;
`;

const ScrollBar = styled.div`
  display: flex;
  align-items: center;
  flex: none;
  height: 14px;
  margin-bottom: 1px;
  background: #f0f0f0;

  button {
    width: 12px;
    height: 14px;
  }
`;

const Thumb = styled.div`
  width: 52%;
  height: 12px;
  margin-right: auto;
  background: #cbcbcb;
`;

const PanelFoot = styled.div`
  flex: none;
  height: 3px;
  background: #c6c6c6;
`;

const ResourceBar = styled.nav`
  flex: none;
  width: 27px;
  border-right: 4px solid #f0f0f0;
  background: #dcdcdc;
`;

const Resource = styled.button`
  display: flex;
  align-items: center;
  justify-content: center;
  width: 23px;
  height: ${(p) => (p.$head ? 18 : 31)}px;
  margin-top: ${(p) => (p.$spaced ? 9 : 0)}px;
  margin-bottom: ${(p) => (p.$head ? 12 : 0)}px;
  background: ${(p) => (p.$active ? '#fff' : 'none')};
`;

const Notice = styled.div`
  position: absolute;
  right: 0;
  bottom: 0;
  width: 40px;
  height: 20px;
  background: #f1f5fb;
  color: #3a4350;
  font-size: 10px;
  line-height: 19px;
  white-space: nowrap;
`;

const Meter = styled.div`
  position: absolute;
  right: 38px;
  bottom: -4px;
  display: flex;
  flex-direction: column;
  align-items: center;
  width: 48px;
  height: 48px;
  padding-top: 8px;
  border: 3px solid #35bd79;
  border-right-color: #7fd3a8;
  border-radius: 50%;
  background: #fff;
  color: #333;
  font: 17px/17px 'Open Sans', sans-serif;

  small {
    font-size: 10px;
  }

  span {
    font: 7px/10px 'Open Sans', sans-serif;
  }
`;

const holes = [
  [228, 263, 12],
  [409, 284, 12],
  [590, 305, 12],
  [184, 374, 15],
  [365, 396, 0],
  [546, 416, 0],
];

function Hole({ x, y, drop }) {
  return (
    <g transform={`translate(${x} ${y})`}>
      <ellipse rx="21" ry="15" transform="rotate(-8)" fill="url(#bore)" stroke="#6b4300" strokeWidth="0.8" />
      {drop > 0 && (
        <g clipPath="url(#holeClip)">
          <ellipse cx="3" cy={drop} rx={drop > 12 ? 13 : 17} ry={drop > 12 ? 4 : 7} transform="rotate(-8)" fill="#333" />
        </g>
      )}
    </g>
  );
}

const Ring = ({ x, y }) => (
  <g transform={`translate(${x} ${y})`} strokeWidth="0.8">
    <g clipPath="url(#ringClip)">
      <ellipse rx="76" ry="54" transform="rotate(-12)" fill="#e8a000" />
      <ellipse cx="0" cy="3" rx="76" ry="54" transform="rotate(-12)" fill="url(#groove)" />
      <ellipse cx="1" cy="8" rx="75" ry="54" transform="rotate(-12)" fill="#f0aa10" />
      <ellipse cx="2" cy="12" rx="75" ry="54" transform="rotate(-12)" fill="#ffc000" stroke="#7a4d00" />
    </g>
    <ellipse rx="76" ry="54" transform="rotate(-12)" fill="none" stroke="#7a4d00" />
    <ellipse cx="2" cy="11" rx="52" ry="39" transform="rotate(-10)" fill="#ffc000" stroke="#7a4d00" />
    <ellipse cx="1" cy="8" rx="53" ry="39" transform="rotate(-10)" fill="url(#groove)" />
    <ellipse cx="0" cy="2" rx="54" ry="39" transform="rotate(-10)" fill="#e09900" stroke="#7a4d00" />
    <ellipse rx="54" ry="39" transform="rotate(-10)" fill="#ffc000" stroke="#7a4d00" />
    <ellipse rx="35" ry="25" transform="rotate(-8)" fill="url(#bore)" stroke="#6b4300" />
  </g>
);

// the part and its axes, drawn in window coordinates
const Model = () => (
  <Scene viewBox="104 95 734 580" role="img" aria-label="模型">
    <defs>
      <linearGradient id="bore">
        <stop offset="0" stopColor="#a86900" />
        <stop offset="0.4" stopColor="#7c4b00" />
        <stop offset="0.7" stopColor="#a56700" />
        <stop offset="1" stopColor="#d88c00" />
      </linearGradient>
      <linearGradient id="groove">
        <stop offset="0" stopColor="#ffc42a" />
        <stop offset="0.15" stopColor="#a46700" />
        <stop offset="0.55" stopColor="#6e4200" />
        <stop offset="0.85" stopColor="#b87600" />
        <stop offset="1" stopColor="#e09600" />
      </linearGradient>
      <linearGradient id="foot">
        <stop offset="0" stopColor="#8a5300" />
        <stop offset="0.5" stopColor="#b06b00" />
        <stop offset="0.85" stopColor="#df8b00" />
        <stop offset="1" stopColor="#b87000" />
      </linearGradient>
      <clipPath id="ringClip">
        <ellipse rx="76" ry="54" transform="rotate(-12)" />
      </clipPath>
      <clipPath id="holeClip">
        <ellipse rx="20" ry="15" transform="rotate(-8)" />
      </clipPath>
    </defs>

    <path d="M272 455C281 471 296 482 316 482 341 482 360 468 367 444L300 430z" fill="url(#foot)" />
    <path d="M459 477C468 493 483 503 502 503 528 503 547 490 554 466L490 450z" fill="url(#foot)" />
    <path d="M213 426L218 448 327 459 335 441 323 425z" fill="#7b4800" />
    <path d="M323 440l11 1-7 18z" fill="#f5aa1c" />
    <path d="M396 445l4 23 108 12 6-18-10-10z" fill="#7b4800" />
    <path d="M505 461l10 1-7 18z" fill="#f5aa1c" />
    <path d="M636 313L620 358 623 378 604 433 597 413 580 458 576 430z" fill="#e48b00" />
    <path d="M597 413l7 20-13-1z" fill="#a86500" />
    <path d="M141 388L143 410Q145 419 153 420L559 466Q574 468 581 458L577 430z" fill="#7b4800" />
    <path d="M147 396l6 23M153 398l2 22" stroke="#684000" strokeWidth="0.8" />
    <path d="M558 446L562 466Q575 468 581 458L577 436z" fill="#b06a00" />
    <path d="M577 437L632 286Q638 297 637 309L581 458z" fill="#df8900" stroke="#7a4d00" strokeWidth="0.8" />
    <path
      d="M150 398Q139 396 142 387L196 245Q201 234 212 234L623 280Q634 282 632 292L577 437Q571 447 559 446z"
      fill="#ffc000"
    />
    {holes.map(([x, y, drop]) => (
      <Hole key={x} x={x} y={y} drop={drop} />
    ))}
    <Ring x={293} y={329} />
    <Ring x={481} y={351} />

    <g fontFamily="Liberation Sans, sans-serif" fontSize="9">
      <path d="M386 340L376 290" stroke="#16408f" strokeWidth="1.4" />
      <path d="M375 287l-1 13 7-2zM380 309l-1 15 6 16 0-17z" fill="#123a8a" />
      <path d="M386 340L316 331" stroke="#d84b25" strokeWidth="1.2" />
      <path d="M316 331l12-3v8zM349 335l21-2v6z" fill="#d84b25" />
      <path d="M386 340L366 396" stroke="#3fa52b" strokeWidth="1.4" />
      <path d="M366 398l-2-14 7 2zM375 366l2-15 6 3z" fill="#2f9e33" />
      <text x="377" y="286" fill="#2b4f86">ZM</text>
      <text x="383" y="310" fill="#2b4f86">ZC</text>
      <text x="346" y="332" fill="#a3521c">XC</text>
      <text x="377" y="378" fill="#6b9c1c">YC</text>
      <text x="367" y="403" fill="#3f7a16">YM</text>
    </g>

    <path d="M142 626L145 602l3 10 4 15z" fill="#203890" />
    <path d="M151 628l-6 18-5 9 2-14z" fill="#249238" />
    <path d="M129 613l16 0 6 14-5 14-19-2-3-14z" fill="#c7c7c7" />
    <path d="M124 626l18 0 9 2" fill="none" stroke="#d39b9b" strokeWidth="0.8" />
    <circle cx="151" cy="627" r="2" fill="#e8f2f4" />
    <text x="114" y="627" fill="#8d2f2f" fontFamily="Liberation Sans, sans-serif" fontSize="8">
      X
    </text>
  </Scene>
);

const LogoMark = () => (
  <Svg width="52" height="54" viewBox="0 0 52 54" aria-hidden="true">
    <defs>
      <linearGradient id="swirl" x1="0" y1="1" x2="0.6" y2="0">
        <stop offset="0" stopColor="#10307f" />
        <stop offset="0.5" stopColor="#1b67b4" />
        <stop offset="1" stopColor="#35b4e4" />
      </linearGradient>
    </defs>
    <circle cx="17" cy="8" r="5" fill="#ea6427" />
    <path
      d="M27 5C31 1 37 2 39 5C50 13 49 31 40 41C36 45 31 47 26 46C11 45 3 33 8 24C11 18 18 15 27 17C17 18 12 23 12 29C12 38 20 43 27 42C41 39 46 19 34 7C32 5 30 5 27 5z"
      fill="url(#swirl)"
    />
    <path d="M28 18C29 26 33 32 35 39H27z" fill="#1b5aa8" />
    <path d="M25 21C19 27 18 34 20 39H25z" fill="#123f8c" />
    <path d="M15 47C23 42 29 44 34 48C38 51 43 51 47 47C43 55 36 55 29 50C24 46 20 46 15 47z" fill="#12438f" />
    <path d="M28 4l4-3 4 3" fill="none" stroke="#35b4e4" strokeWidth="1.5" />
  </Svg>
);

const resources = [
  'rAssembly',
  'rConstraint',
  'rPart',
  'rOp',
  'rMachine',
  'rRobot',
  'rBooks',
  'rInfo',
  'rWeb',
  'rClock',
  'rRainbow',
  'rWand',
  'rMotion',
  'rNotes',
  'rFlow',
  'rList',
];

const spacedResources = ['rInfo', 'rWeb', 'rClock'];

const LeftMark = () => (
  <SideMark aria-label="选项">
    <Svg width="3" height="5" viewBox="0 0 3 5">
      <path d="M3 0v5L0 2.5z" fill="#222" />
    </Svg>
  </SideMark>
);

const Chevron = ({ d }) => (
  <Svg width="12" height="8" viewBox="0 0 12 8">
    <path d={d} fill="none" stroke="#444" strokeWidth="1.5" />
  </Svg>
);

const Navigator = () => (
  <Panel>
    <PanelTitle>
      <input type="checkbox" aria-label="固定" />
      工序导航器 - 程序顺序
    </PanelTitle>
    <TableBox>
      <Table>
        <colgroup>
          <col style={{ width: '44%' }} />
          <col style={{ width: '21%' }} />
          <col style={{ width: '13%' }} />
          <col style={{ width: '11%' }} />
          <col style={{ width: '11%' }} />
        </colgroup>
        <thead>
          <tr>
            {['名称', '刀具', '换刀', '刀轨', '余量'].map((name) => (
              <th key={name}>{name}</th>
            ))}
          </tr>
        </thead>
        <tbody>
          <tr>
            <td>NC_PROGRAM</td>
            <td /><td /><td /><td />
          </tr>
          <tr>
            <td>
              <Node $depth={1}>
                <Icon name="folder" size={11} />
                未用项
              </Node>
            </td>
            <td /><td /><td /><td />
          </tr>
          <tr>
            <td>
              <Node $depth={1}>
                <Icon name="alert" size={11} />
                <Icon name="folder" size={11} />
                PROGRAM
              </Node>
            </td>
            <td /><td /><td /><td />
          </tr>
          {Array.from({ length: 34 }, (_, i) => (
            <tr key={i}>
              <td /><td /><td /><td /><td />
            </tr>
          ))}
        </tbody>
      </Table>
    </TableBox>
    <ScrollBar>
      <button aria-label="向左">
        <Chevron d="M8 1L5 4l3 3" />
      </button>
      <Thumb />
      <button aria-label="向右">
        <Chevron d="M4 1l3 3-3 3" />
      </button>
    </ScrollBar>
    <PanelFoot />
  </Panel>
);

const App = () => (
  <Screen>
    <GlobalStyle />
    <MenuBar>
      <Icon name="nx" size={12} />
      {menus.map(([name, key]) => (
        <MenuItem key={name}>
          {name}
          {key && (
            <>
              (<u>{key}</u>)
            </>
          )}
        </MenuItem>
      ))}
      <WindowButtons>
        <button aria-label="最小化">
          <Svg width="9" height="9" viewBox="0 0 9 9"><path d="M1 8h6" stroke="#111" strokeWidth="2" /></Svg>
        </button>
        <button aria-label="还原">
          <Svg width="9" height="9" viewBox="0 0 9 9">
            <path d="M3 3V1h5v4H6M1 4h5v4H1zM3 2h5M1 4h5" fill="none" stroke="#111" strokeWidth="1.2" />
          </Svg>
        </button>
        <button aria-label="关闭">
          <Svg width="9" height="9" viewBox="0 0 9 9"><path d="M1 1l6 7M7 1L1 8" stroke="#111" strokeWidth="2" /></Svg>
        </button>
      </WindowButtons>
    </MenuBar>

    <Toolbar>
      <Group $width={480}>
        <Grip />
        <Tools list="launch" />
        <Launch>启动</Launch>
        <Tools list="v newFile open save print | cut copy paste del | undo v | globe v | rotate boxes |" />
        <Field $width={95}>
          <input aria-label="查找命令" defaultValue="查找命令" />
          <Icon name="search" size={12} />
        </Field>
        <Tools list=". ;" />
      </Group>
      <Group $width={112}>
        <Grip />
        <Tools list="sheet v globe v swatch v ;" />
      </Group>
      <Group $width={277}>
        <Grip />
        <Tools list="line v line arc circles A [A] profileLoop plane shape spline" />
        <Overflow />
      </Group>
      <Group $width={155}>
        <Grip />
        <Tools list=". keyCube joinRight joinCross sCurve twoArcs tilde ;" />
      </Group>
      <Group>
        <Grip />
        <Tools list="colorCube v" />
        <Overflow />
      </Group>
    </Toolbar>

    <Toolbar>
      <Group $width={393}>
        <Grip />
        <Tools list="drawer v . abs xBar building left right tealLeft tealRight winLeft winRight yellowCube greenCube grayCubes wrench linkCube folderNew ;" />
      </Group>
      <Group $width={641}>
        <Grip />
        <Tools list="rotate boxes pillar sketchPurple wireCube hookR layersGray bluePad stripes arrowPad blueSteps redCube pinkFold tray splitPad blueSlab rect v hexagon v spool bigU zyx pinkGrid ring tag circle hook" />
        <Overflow />
      </Group>
      <Group>
        <Grip />
        <Tools list="path" />
        <Overflow />
      </Group>
    </Toolbar>

    <Toolbar $short $strong>
      <Group>
        <Gap $size={2} />
        <Select label="过滤器" value="无选择过滤器" width={99} />
        <Gap $size={5} />
        <Select label="范围" value="整个装配" width={104} />
        <Tools small list="| gearBox | dashes plusBox v dashes dashes | hexDot dashRect v | grayCube blueCube" />
        <Overflow single />
      </Group>
    </Toolbar>

    <Main>
      <Viewport>
        <Model />
        <Logo>
          <LogoMark />
          <LogoName>千言教育</LogoName>
          <LogoSub>QIANYAN EDUCATION</LogoSub>
        </Logo>
        <Captions>
          <p>没有激流则谈不上勇进,</p>
          <p>没有山峰则谈不上攀登。</p>
        </Captions>
      </Viewport>

      <SideTools>
        <SideGroup $height={110}>
          <Grip $flat />
          <Tool $active aria-label="程序顺序视图">
            <Icon name="navOrder" />
          </Tool>
          <Tools list="navTool navGeo navMethod" />
          <LeftMark />
        </SideGroup>
        <SideGroup $height={135}>
          <Grip $flat />
          <Tools list="newProg newTool newGeo newMethod newOp" />
          <LeftMark />
        </SideGroup>
        <SideGroup $height={325}>
          <Grip $flat />
          <Tools list="gTool gPath1 gPath2 gPath3 gPath4 gCheck bigV gCheckPen" />
          <hr />
          <Tools list="gSpray" />
          <hr />
          <Tools list="gList gDoc gDoc2 pBox" />
          <LeftMark />
        </SideGroup>
      </SideTools>

      <Navigator />

      <ResourceBar>
        <Resource $head aria-label="设置">
          <Icon name="gear" size={12} />
        </Resource>
        {resources.map((name) => (
          <Resource key={name} $active={name === 'rOp'} $spaced={spacedResources.includes(name)} aria-label={name}>
            <Icon name={name} />
          </Resource>
        ))}
      </ResourceBar>
    </Main>

    <Toolbar>
      <Group $width={291}>
        <Grip />
        <Gap $size={5} />
        <Select label="图层" value="1" width={35} />
        <Tools list=". layerStack layerStack v . redAxes v | chain chainGold | eraser v | ruler v measure ;" />
      </Group>
      <Group $width={158}>
        <Grip />
        <Tools list="palette v . plus v lampPad v . goldBox goldBall ;" />
      </Group>
      <Group $width={521}>
        <Grip />
        <Tools list="windows blueGold funnel toolA toolB toolHead toolHeat toolC toolD toolE hatch wires bolt block ears floppy textEdit pencil swap pens calc clockBox ;" />
      </Group>
      <Group>
        <Grip />
        <Tools list="darkCube blocks blocks" />
        <Overflow />
      </Group>
    </Toolbar>
    <Status />

    <Notice>内容更新</Notice>
    <Meter>
      <div>
        75<small>%</small>
      </div>
      <span>↑ 0K/s</span>
    </Meter>
  </Screen>
);

export default App;
